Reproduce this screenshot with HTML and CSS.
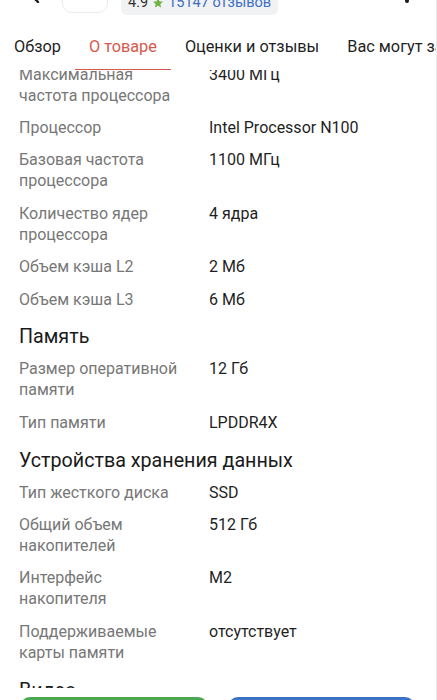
FILE: index.html
```html
<!DOCTYPE HTML>
<html>
<head>
    <meta charset="utf-8">
    <title>О товаре</title>
    <link rel="stylesheet" href="styles.css">
</head>
<body>

<div class="screen">
    <div class="topbar">
        <svg class="back" width="24" height="24" viewBox="0 0 24 24">
            <path d="M15 5 L8 12 L15 19" fill="none" stroke="#1b1b1b" stroke-width="2.4" stroke-linecap="round" stroke-linejoin="round"/>
        </svg>
        <div class="logo"></div>
        <div class="rating">
            <span class="score">4.9</span>
            <svg class="star" width="12" height="12" viewBox="0 0 24 24">
                <path d="M12 2 L14.9 8.6 L22 9.3 L16.6 14 L18.2 21 L12 17.3 L5.8 21 L7.4 14 L2 9.3 L9.1 8.6 Z" fill="#72b443"/>
            </svg>
            <span class="count">15147 отзывов</span>
        </div>
        <svg class="more" width="24" height="24" viewBox="0 0 24 24">
            <circle cx="12" cy="5" r="2" fill="#1b1b1b"/>
            <circle cx="12" cy="12" r="2" fill="#1b1b1b"/>
            <circle cx="12" cy="19" r="2" fill="#1b1b1b"/>
        </svg>
    </div>

    <div class="tabs">
        <div class="tab">Обзор</div>
        <div class="tab active">О товаре</div>
        <div class="tab">Оценки и отзывы</div>
        <div class="tab">Вас могут заинтересовать</div>
    </div>

    <div class="specs">
        <div class="specs-list">
            <div class="row"><div class="label">Максимальная частота процессора</div><div class="value">3400 МГц</div></div>
            <div class="row"><div class="label">Процессор</div><div class="value">Intel Processor N100</div></div>
            <div class="row"><div class="label">Базовая частота процессора</div><div class="value">1100 МГц</div></div>
            <div class="row"><div class="label">Количество ядер процессора</div><div class="value">4 ядра</div></div>
            <div class="row"><div class="label">Объем кэша L2</div><div class="value">2 Мб</div></div>
            <div class="row"><div class="label">Объем кэша L3</div><div class="value">6 Мб</div></div>

            <h2 class="group">Память</h2>
            <div class="row"><div class="label">Размер оперативной памяти</div><div class="value">12 Гб</div></div>
            <div class="row"><div class="label">Тип памяти</div><div class="value">LPDDR4X</div></div>

            <h2 class="group">Устройства хранения данных</h2>
            <div class="row"><div class="label">Тип жесткого диска</div><div class="value">SSD</div></div>
            <div class="row"><div class="label">Общий объем накопителей</div><div class="value">512 Гб</div></div>
            <div class="row"><div class="label">Интерфейс накопителя</div><div class="value">M2</div></div>
            <div class="row"><div class="label">Поддерживаемые карты памяти</div><div class="value">отсутствует</div></div>

            <h2 class="group">Видео</h2>
        </div>
    </div>

    <div class="actions">
        <div class="btn btn-green"></div>
        <div class="btn btn-blue"></div>
    </div>
</div>

</body>
</html>
```

FILE: styles.css
```css
body, html {
    margin: 0;
    padding: 0;
    background: #fff;
    font-family: Roboto, "Noto Sans", sans-serif;
    color: #1f1f1f;
}

.screen {
    height: 700px;
    display: flex;
    flex-direction: column;
    overflow: hidden;
    border-right: 1px solid #ececec;
    box-sizing: border-box;
}

/* top bar, scrolled mostly out of view */
.topbar {
    flex: none;
    height: 17px;
    padding-bottom: 3px;
    box-sizing: border-box;
    display: flex;
    align-items: flex-end;
    overflow: hidden;
}
.back {
    flex: none;
    margin: 0 0 7px 23px;
}
.logo {
    flex: none;
    width: 44px;
    height: 44px;
    margin: 0 0 1px 15px;
    border: 1px solid #ebebeb;
    border-radius: 10px;
}
.rating {
    flex: none;
    display: flex;
    align-items: center;
    gap: 4px;
    margin-left: 13px;
    padding: 0 7px 3px 7px;
    margin-bottom: -1px;
    background: #f1f2f4;
    border-radius: 6px;
    font-size: 14.5px;
    line-height: 18px;
    white-space: nowrap;
}
.score {
    color: #333;
}
.count {
    color: #3c6fc4;
}
.more {
    flex: none;
    margin: 0 17px 8px auto;
}

/* tabs */
.tabs {
    flex: none;
    height: 53px;
    display: flex;
    white-space: nowrap;
    overflow: hidden;
    background: #fff;
    position: relative;
    z-index: 1;
}
.tab {
    flex: none;
    padding: 19px 14px 0;
    font-size: 16.3px;
    line-height: 22px;
    color: #1f1f1f;
    box-sizing: border-box;
    height: 53px;
}
.tab.active {
    color: #d6584c;
    border-bottom: 2px solid #d6584c;
    margin-bottom: -1px;
    height: 54px;
}

/* specifications */
.specs {
    flex: none;
    height: 618px;
    overflow: hidden;
}
.specs-list {
    margin-top: -12px;
}
.row {
    display: grid;
    grid-template-columns: 170px 1fr;
    column-gap: 20px;
    padding: 5.7px 19px;
    font-size: 16px;
    line-height: 21px;
}
.label {
    color: #777;
}
.value {
    color: #1f1f1f;
}
.group {
    margin: 9px 19px 2.5px;
    font-size: 19.7px;
    line-height: 26px;
    font-weight: normal;
    color: #1a1a1a;
}

/* bottom buttons */
.actions {
    flex: none;
    display: flex;
    gap: 20px;
    padding: 9px 21px 0 20px;
    background: #fff;
}
.btn {
    flex: 1;
    height: 44px;
    border-radius: 10px;
}
.btn-green {
    background: #4aa851;
}
.btn-blue {
    background: #3b72c4;
}
```
